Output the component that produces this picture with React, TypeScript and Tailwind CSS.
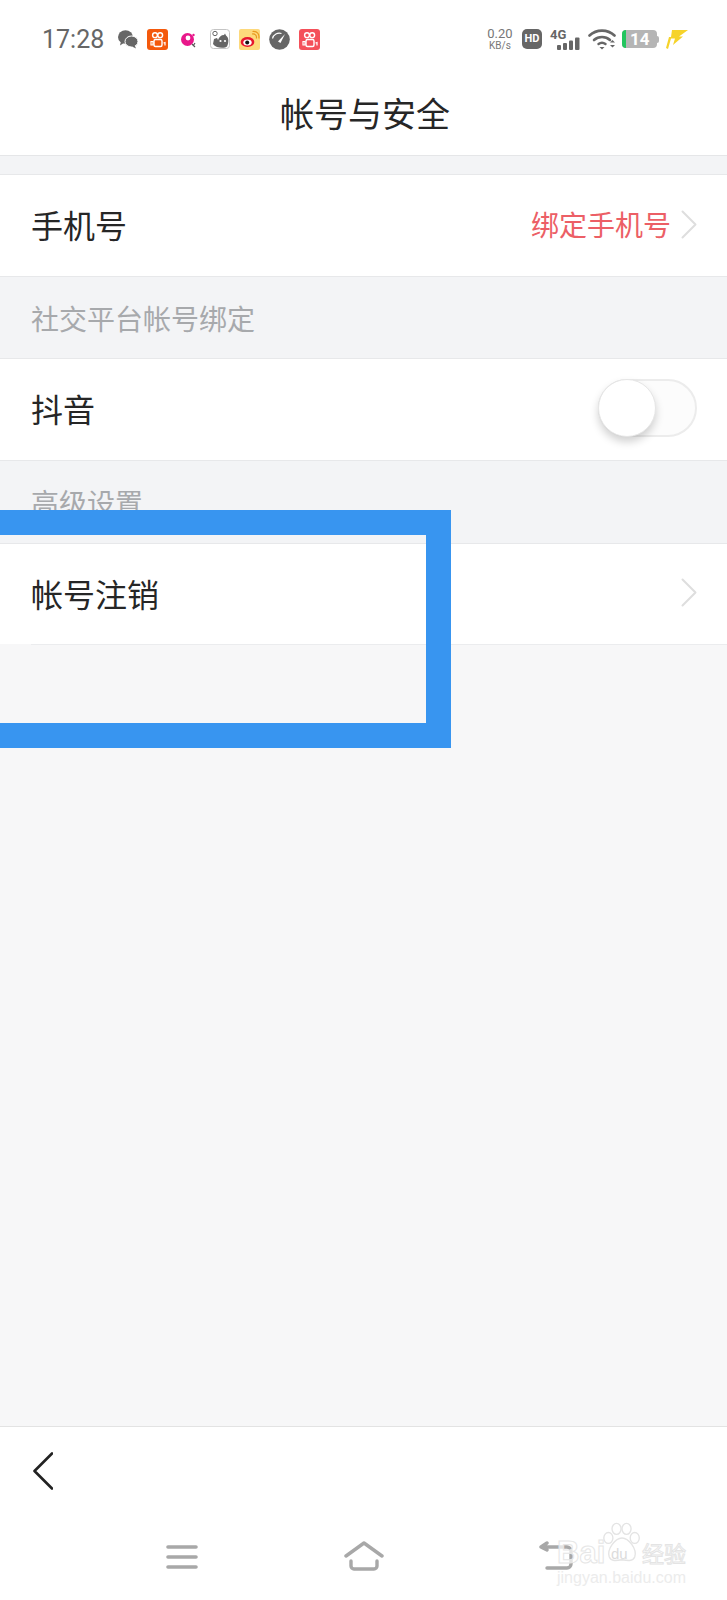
import React from "react";

const cjk = { fontFamily: '"Noto Sans CJK SC", "Noto Sans", sans-serif' };

function Chevron() {
  return (
    <svg width="16" height="29" viewBox="0 0 16 29" fill="none" className="shrink-0">
      <path d="M1.500 1.500l13 13-13 13" stroke="#dedede" strokeWidth="2" strokeLinecap="round" strokeLinejoin="round" />
    </svg>
  );
}

function KuaiIcon({ bg }: { bg: string }) {
  return (
    <svg width="21" height="21" viewBox="0 0 21 21" fill="none">
      <rect width="21" height="21" rx="3" fill={bg} />
      <circle cx="8" cy="6.200" r="2.400" stroke="#fff" strokeWidth="1.400" />
      <circle cx="13.200" cy="6.200" r="2.400" stroke="#fff" strokeWidth="1.400" />
      <rect x="7" y="10.500" width="8" height="7" rx="1.500" stroke="#fff" strokeWidth="1.400" />
      <path d="M4 12.500h2v3.500H4zM16.500 14l1.500-.5v3" stroke="#fff" strokeWidth="1.200" />
    </svg>
  );
}

function NotifIcons() {
  return (
    <div className="flex items-center gap-[9px] ml-[14px]">
      <svg width="20" height="19" viewBox="0 0 20 19" fill="#666">
        <ellipse cx="7.500" cy="7" rx="7.500" ry="6.800" />
        <path d="M3 11l-1 4.500 4.500-3z" />
        <ellipse cx="13.500" cy="11.500" rx="6.500" ry="5.500" stroke="#fff" strokeWidth="1" />
        <path d="M16.500 15l1.500 3.500-4-2z" />
      </svg>
      <KuaiIcon bg="#f4590c" />
      <svg width="20" height="20" viewBox="0 0 20 20" className="ml-[1px] mr-[3px]">
        <circle cx="9.500" cy="10.500" r="6.500" fill="#e8178a" />
        <circle cx="10" cy="9" r="2.400" fill="#fff" />
        <path d="M14 15l3 3M17 14l-2 3" stroke="#555" strokeWidth="1.200" />
        <circle cx="15.500" cy="6" r="1.200" fill="#e8178a" />
      </svg>
      <svg width="20" height="20" viewBox="0 0 20 20">
        <rect x=".5" y=".5" width="19" height="19" rx="3" fill="#fff" stroke="#c4c4c4" />
        <circle cx="5" cy="4.500" r="2.200" fill="none" stroke="#666" />
        <path d="M3 15l1-5 3-1 1 2c1-3 3-5 6-5l1-1.500 1 2c3 2 3 7 1 11-2 2-11 2-14-2.500z" fill="#666" />
        <circle cx="10.500" cy="12" r="1.100" fill="#fff" />
        <circle cx="15" cy="12" r="1.100" fill="#fff" />
      </svg>
      <svg width="21" height="21" viewBox="0 0 21 21">
        <rect width="21" height="21" rx="2" fill="#fdd97c" />
        <ellipse cx="8.500" cy="13" rx="6.800" ry="5" fill="#e6162d" />
        <ellipse cx="8.500" cy="13.500" rx="4.200" ry="3" fill="#fff" />
        <circle cx="8.200" cy="13.500" r="2" fill="#111" />
        <path d="M13 5c3-.6 5 1.500 4.400 4.500M13.500 2.500c4.500-.7 7.300 2.500 6.300 7" stroke="#e89a1e" strokeWidth="1.200" fill="none" />
      </svg>
      <svg width="21" height="21" viewBox="0 0 21 21">
        <circle cx="10.500" cy="10.500" r="10.300" fill="#666" />
        <path d="M9 12.500l7-7.500-4.500 9z" fill="#fff" />
        <path d="M3.500 9.500a7 7 0 0 1 9-5" stroke="#fff" strokeWidth="1.100" fill="none" />
      </svg>
      <KuaiIcon bg="#f4505a" />
    </div>
  );
}

function StatusRight() {
  return (
    <div className="flex items-center ml-auto mr-[39px]">
      <div className="flex flex-col items-center text-[#777] leading-none w-[26px]" style={{ fontFamily: "Roboto, sans-serif" }}>
        <span className="text-[13px] leading-[12px]">0.20</span>
        <span className="text-[10px] leading-[11px]">KB/s</span>
      </div>
      <div className="ml-[9px] w-[20px] h-[20px] rounded-[5px] bg-[#666] text-white text-[11px] font-bold flex items-center justify-center" style={{ fontFamily: "Roboto, sans-serif" }}>
        HD
      </div>
      <div className="ml-[8px] w-[31px] h-[22px] relative">
        <span className="absolute left-0 top-[-3px] text-[13px] font-bold text-[#666]" style={{ fontFamily: "Roboto, sans-serif" }}>4G</span>
        <svg width="31" height="22" viewBox="0 0 31 22" fill="#666" className="absolute left-0 top-0">
          <rect x="7" y="17" width="4" height="5" rx="1" />
          <rect x="13" y="15" width="4" height="7" rx="1" />
          <rect x="19" y="12.500" width="4" height="9.500" rx="1" />
          <rect x="25" y="9.500" width="4.500" height="12.500" rx="1" />
        </svg>
      </div>
      <svg width="28" height="22" viewBox="0 0 28 22" fill="none" className="ml-[7px]">
        <path d="M1.500 7.500c7-6.500 18-6.500 25 0" stroke="#666" strokeWidth="2.600" strokeLinecap="round" />
        <path d="M6 12c4.500-4 11.500-4 16 0" stroke="#666" strokeWidth="2.600" strokeLinecap="round" />
        <path d="M10.500 16c2-1.500 5-1.500 7 0" stroke="#666" strokeWidth="2.400" strokeLinecap="round" />
        <path d="M11.500 19h5l-2.500 2.500zM22 14.500l2.500-2.500 2.500 2.500zM22 17h5l-2.500 2.500z" fill="#666" />
      </svg>
      <div className="ml-[6px] w-[37px] h-[18px] flex items-center">
        <div className="w-[35px] h-[18px] rounded-[4px] bg-[#b5b5b5] overflow-hidden flex items-center">
          <div className="w-[4px] h-full bg-[#22c55e]" />
          <span className="ml-[4px] text-white text-[17px] font-bold leading-none" style={{ fontFamily: "Roboto, sans-serif" }}>14</span>
        </div>
        <div className="w-[2px] h-[7px] bg-[#b5b5b5] rounded-r-sm" />
      </div>
      <svg width="22" height="19" viewBox="0 0 22 19" className="ml-[7px]" fill="#f6d32a">
        <path d="M6 0h16l-9 6.500h4L7 15l2-6.500H5L2 19l-2-1 3-11h2z" />
      </svg>
    </div>
  );
}

function Row({ label, heightClass, children, inset }: { label: string; heightClass: string; children?: React.ReactNode; inset?: boolean }) {
  return (
    <div className={`bg-white ${heightClass} shrink-0 flex items-center justify-between pl-[31px] pr-[30px] pb-[3px] border-t border-[#e7e8ea] ${inset ? "" : "border-b"}`}>
      <span className="text-[32px] text-[#262626]">{label}</span>
      {children}
    </div>
  );
}

function SectionLabel({ text, heightClass }: { text: string; heightClass: string }) {
  return (
    <div className={`${heightClass} shrink-0 pl-[31px] pt-[20px] text-[28px] leading-[42px] text-[#a7a9ac] bg-[#f3f4f6]`}>{text}</div>
  );
}

function Watermark() {
  return (
    <div className="absolute left-[557px] top-[1521px] w-[134px] h-[66px]">
      <svg width="40" height="43" viewBox="0 0 44 44" fill="#fff" stroke="#e4e4e4" strokeWidth="1.500" className="absolute left-[45px] top-0">
        <ellipse cx="7" cy="17" rx="5" ry="6" />
        <ellipse cx="16" cy="7" rx="5" ry="6" />
        <ellipse cx="27" cy="7" rx="5" ry="6" />
        <ellipse cx="36" cy="17" rx="5" ry="6" />
        <path d="M22 17c7 0 17 12 14 21-2 5-8 4-14 3-6 1-12 2-14-3-3-9 7-21 14-21z" />
      </svg>
      <span className="absolute left-0 top-[16px] text-[31px] font-bold leading-[32px] text-white/70 [-webkit-text-stroke:1px_#e6e6e6]" style={{ fontFamily: '"Liberation Sans", sans-serif' }}>Bai</span>
      <span className="absolute left-[54px] top-[24px] text-[15px] leading-[18px] text-[#dcdcdc]" style={{ fontFamily: '"Liberation Sans", sans-serif' }}>du</span>
      <span className="absolute left-[85px] top-[17px] text-[22px] leading-[28px] text-white [-webkit-text-stroke:1px_#e4e4e4]">经验</span>
      <span className="absolute left-0 top-[48px] text-[16px] leading-[18px] text-[#ececec]" style={{ fontFamily: '"Liberation Sans", sans-serif' }}>jingyan.baidu.com</span>
    </div>
  );
}

export default function App() {
  return (
    <div className="relative w-[727px] h-[1600px] overflow-hidden bg-[#f7f7f8] flex flex-col" style={cjk}>
      {/* 顶部 */}
      <div className="bg-white border-b border-[#e5e6e8] h-[156px] shrink-0">
        <div className="h-[78px] flex items-center pl-[42px]">
          <span className="text-[25px] text-[#666] leading-none" style={{ fontFamily: "Roboto, sans-serif" }}>17:28</span>
          <NotifIcons />
          <StatusRight />
        </div>
        <div className="h-[77px] flex items-center justify-center pb-[8px] pl-[3px] text-[34px] text-[#262626]">帐号与安全</div>
      </div>

      <div className="h-[18px] bg-[#f3f4f6] shrink-0" />
      <Row label="手机号" heightClass="h-[103px]">
        <div className="flex items-center gap-[10px]">
          <span className="text-[28px] text-[#ec5f66]">绑定手机号</span>
          <Chevron />
        </div>
      </Row>
      <SectionLabel text="社交平台帐号绑定" heightClass="h-[81px]" />
      <Row label="抖音" heightClass="h-[103px]">
        <div className="relative w-[99px] h-[58px] rounded-full border-2 border-[#ececec] bg-[#fcfcfc]">
          <div className="absolute left-[-2px] top-[-2px] w-[58px] h-[58px] rounded-full bg-white border border-[#e6e6e6] shadow-[0_5px_8px_rgba(0,0,0,0.18)]" />
        </div>
      </Row>
      <SectionLabel text="高级设置" heightClass="h-[82px]" />
      <Row label="帐号注销" heightClass="h-[101px]" inset>
        <Chevron />
      </Row>
      <div className="h-px ml-[31px] bg-[#ebecee] shrink-0" />

      <div className="flex-1" />

      {/* 底部 */}
      <div className="bg-white border-t border-[#e3e3e3] h-[174px] shrink-0 flex flex-col">
        <div className="pl-[33px] pt-[25px]">
          <svg width="20" height="38" viewBox="0 0 20 38" fill="none">
            <path d="M19 1.500L1.500 19 19 36.500" stroke="#222" strokeWidth="2.600" strokeLinecap="round" strokeLinejoin="round" />
          </svg>
        </div>
        <div className="flex items-center pl-[166px] mt-[51px]">
          <svg width="32" height="26" viewBox="0 0 32 26" fill="none" stroke="#a8a8a8" strokeWidth="3.600" strokeLinecap="round" className="mt-[2px]">
            <path d="M2 3h28M2 13h28M2 23h28" />
          </svg>
          <svg width="40" height="30" viewBox="0 0 40 30" fill="none" stroke="#a8a8a8" strokeWidth="3.400" strokeLinecap="round" strokeLinejoin="round" className="ml-[146px]">
            <path d="M2 15L20 2l18 13M7 20v5a3 3 0 0 0 3 3h20a3 3 0 0 0 3-3v-5" />
          </svg>
          <svg width="34" height="30" viewBox="0 0 34 30" fill="none" stroke="#a8a8a8" strokeWidth="3.400" strokeLinecap="round" strokeLinejoin="round" className="ml-[155px]">
            <path d="M2 6h26a4 4 0 0 1 4 4v13a4 4 0 0 1-4 4H8M8 2L2 6l6 3" />
          </svg>
        </div>
      </div>

      {/* 标注框 */}
      <div className="absolute left-[-30px] top-[510px] w-[481px] h-[238px] border-[25px] border-[#3895f0]" />
      <Watermark />
    </div>
  );
}
